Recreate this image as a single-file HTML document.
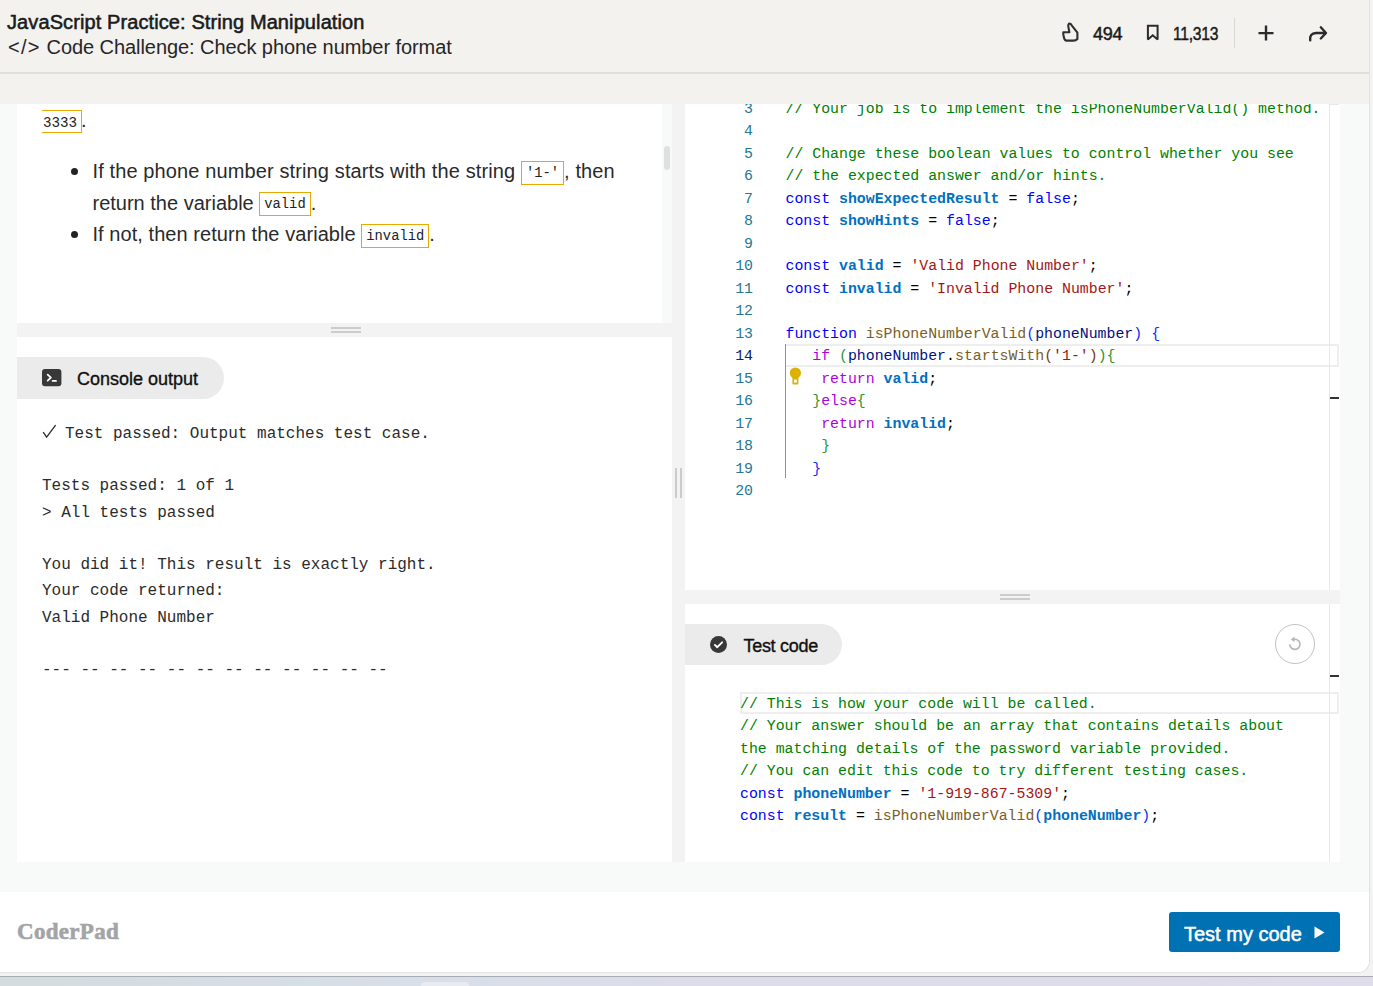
<!DOCTYPE html>
<html>
<head>
<meta charset="utf-8">
<style>
*{box-sizing:border-box;margin:0;padding:0}
html,body{width:1373px;height:986px;overflow:hidden}
body{position:relative;background:#f3f3f3;font-family:"Liberation Sans",sans-serif;color:#1f1f1f}
.abs{position:absolute}
#desk{left:0;top:976px;width:1373px;height:10px;background:linear-gradient(90deg,#d4dcdf 0%,#d8dfe9 33%,#dcdcea 50%,#dfdcec 100%);border-top:1px solid #a8abb2}
#win{left:0;top:0;width:1370px;height:973px;background:#f8f9f9;border-right:1px solid #e2e2e2;border-bottom:1px solid #e2e2e2;border-bottom-right-radius:12px;overflow:hidden}
#hdr{left:0;top:0;width:1369px;height:104px;background:#f3f2ef}
#hdrline{left:0;top:72px;width:1369px;height:2px;background:#dfdedb}
#footer{left:0;top:892px;width:1369px;height:80px;background:#fff}
.panel{background:#fff;overflow:hidden}
.split-h{background:#f3f3f3}
.grip-h{position:absolute;width:30px;height:6px;border-top:2px solid #cccccc;border-bottom:2px solid #cccccc}
.grip-v{position:absolute;width:7px;height:30px;border-left:2px solid #cccccc;border-right:2px solid #cccccc}
.pill{position:absolute;background:#ebebeb;border-radius:0 21px 21px 0}
.mono{font-family:"Liberation Mono",monospace}
.desc{font-size:20px;line-height:32px;color:#2a2a2a;white-space:nowrap}
.code{display:inline-block;vertical-align:top;margin-top:5px;height:24px;font-family:"Liberation Mono",monospace;font-size:13.8px;line-height:23px;border:1px solid #e9a800;padding:0 4px;color:#222;letter-spacing:0}
.hl{font-size:18px;line-height:22px;color:#111;white-space:nowrap;-webkit-text-stroke:0.35px #111}
.console{font-family:"Liberation Mono",monospace;font-size:16px;line-height:26px;color:#2b2b2b;white-space:pre}
.ln{position:absolute;left:0;width:68px;text-align:right;font-family:"Liberation Mono",monospace;font-size:14.875px;line-height:22px;color:#237893;white-space:pre}
.cl{position:absolute;left:100.5px;font-family:"Liberation Mono",monospace;font-size:14.875px;line-height:22px;color:#000;white-space:pre}
.bul{width:7px;height:7px;border-radius:50%;background:#222}
</style>
</head>
<body>
<div id="desk" class="abs"></div>
<div class="abs" style="left:421px;top:982px;width:48px;height:10px;background:#e8ecf2;border-radius:4px"></div>
<div id="win" class="abs">
  <div id="hdr" class="abs"></div>
  <div id="hdrline" class="abs"></div>
  <div class="abs" id="title" style="left:7px;top:10px;font-size:20px;line-height:24px;color:#1b1b1b;white-space:nowrap;letter-spacing:0.1px;-webkit-text-stroke:0.55px #1b1b1b">JavaScript Practice: String Manipulation</div>
  <div class="abs" id="subtitle" style="left:8px;top:35px;font-size:20px;line-height:24px;color:#262626;white-space:nowrap"><span style="letter-spacing:1.3px">&lt;/&gt;</span><span style="letter-spacing:0.2px"> </span><span style="letter-spacing:-0.07px">Code Challenge: Check phone number format</span></div>

  <!-- header right -->
  <svg class="abs" style="left:1055px;top:18px" width="30" height="28" viewBox="0 0 30 28">
    <path d="M8.3 14.2 L14.4 14.2 L13.3 8.6 C13.0 6.7 13.7 5.6 14.6 5.6 C15.4 5.6 16.1 6.2 16.7 7.4 L22.4 14.6 L22.4 21.0 C21.4 22.1 20.0 22.6 18.4 22.6 L11.6 22.6 C10.2 22.6 9.4 21.6 9.0 19.8 L8.3 16.4 Z" fill="none" stroke="#303030" stroke-width="2.1" stroke-linejoin="round"/>
  </svg>
  <div class="abs" style="left:1093px;top:23px;font-size:18px;line-height:22px;color:#1b1b1b;letter-spacing:-0.3px;-webkit-text-stroke:0.5px #1b1b1b">494</div>
  <svg class="abs" style="left:1145px;top:23px" width="16" height="20" viewBox="0 0 16 20">
    <path d="M2.9 2.7 L12.6 2.7 L12.6 16.4 L7.75 12.3 L2.9 16.4 Z" fill="none" stroke="#2b2b2b" stroke-width="2" stroke-linejoin="miter" stroke-miterlimit="2"/>
  </svg>
  <div class="abs" style="left:1173px;top:23px;font-size:18px;line-height:22px;color:#1b1b1b;letter-spacing:-0.3px;-webkit-text-stroke:0.45px #1b1b1b;transform:scaleX(0.87);transform-origin:0 0">11,313</div>
  <div class="abs" style="left:1234px;top:18px;width:1px;height:30px;background:#d9d8d5"></div>
  <svg class="abs" style="left:1256px;top:23px" width="20" height="20" viewBox="0 0 20 20">
    <path d="M10 2.6 V17.6 M2.5 10.1 H17.5" stroke="#2b2b2b" stroke-width="2.4"/>
  </svg>
  <svg class="abs" style="left:1307px;top:23px" width="22" height="20" viewBox="0 0 22 20">
    <path d="M3.2 17.3 C2.6 13.0 4.6 10.0 9.0 10.0 L18.6 10.0 M13.8 4.3 L19.0 10.0 L13.8 15.5" fill="none" stroke="#2b2b2b" stroke-width="2.4" stroke-linecap="round" stroke-linejoin="round"/>
  </svg>

  <!-- vertical strip -->
  <div class="abs split-h" style="left:672px;top:104px;width:13px;height:758px"></div>
  <div class="grip-v" style="left:675px;top:468px"></div>

  <!-- description panel -->
  <div class="abs panel" style="left:17px;top:104px;width:645px;height:219px">
    <div class="abs" style="left:25px;top:6px;height:23px;border:1px solid #e9a800;border-left:none;padding:0 4px 0 1px;font-family:'Liberation Mono',monospace;font-size:13.75px;line-height:21px;color:#222"><span style="position:relative;top:1.5px;font-size:14.2px">3333</span></div>
    <div class="abs" style="left:64px;top:3px;font-size:20px;line-height:26px;color:#222">.</div>
    <div class="bul abs" style="left:54px;top:64px"></div>
    <div class="bul abs" style="left:54px;top:127px"></div>
    <div class="abs desc" style="left:75.5px;top:51px;letter-spacing:0.12px">If the phone number string starts with the string <span class="code" style="margin-top:6px">'1-'</span>, then</div>
    <div class="abs desc" style="left:75.5px;top:83px">return the variable <span class="code">valid</span>.</div>
    <div class="abs desc" style="left:75.5px;top:114px;letter-spacing:0.06px">If not, then return the variable <span class="code" style="margin-top:6px">invalid</span>.</div>
  </div>
  <div class="abs" style="left:662px;top:104px;width:10px;height:219px;background:#f8f9f9"></div>
  <div class="abs" style="left:664px;top:146px;width:6px;height:24px;background:#dfe0e0;border-radius:3px"></div>

  <!-- left splitter -->
  <div class="abs split-h" style="left:17px;top:323px;width:655px;height:14px"></div>
  <div class="grip-h" style="left:331px;top:327px"></div>

  <!-- console panel -->
  <div class="abs panel" style="left:17px;top:337px;width:655px;height:525px">
    <div class="pill" style="left:0;top:20px;width:207px;height:42px"></div>
    <svg class="abs" style="left:25px;top:32px" width="20" height="18" viewBox="0 0 20 18">
      <rect x="0" y="0" width="19.4" height="17.2" rx="3" fill="#383838"/>
      <path d="M5.7 5.6 L8.9 8.6 L5.7 11.6" fill="none" stroke="#fff" stroke-width="1.8" stroke-linecap="round" stroke-linejoin="round"/>
      <path d="M10.6 11.9 H14" stroke="#fff" stroke-width="1.8" stroke-linecap="round"/>
    </svg>
    <div class="abs hl" style="left:60px;top:31.2px;letter-spacing:0px">Console output</div>
    <svg class="abs" style="left:25px;top:87px" width="15" height="15" viewBox="0 0 15 15"><path d="M1.2 8.2 L4.6 13.2 L13.6 1.2" fill="none" stroke="#2b2b2b" stroke-width="1.3"/></svg>
    <div class="abs console" style="left:25px;top:84px"><span style="display:inline-block;width:13.4px"></span> Test passed: Output matches test case.</div>
    <div class="abs console" style="left:25px;top:136px">Tests passed: 1 of 1</div>
    <div class="abs console" style="left:25px;top:163px">&gt; All tests passed</div>
    <div class="abs console" style="left:25px;top:215px">You did it! This result is exactly right.</div>
    <div class="abs console" style="left:25px;top:241px">Your code returned:</div>
    <div class="abs console" style="left:25px;top:268px">Valid Phone Number</div>
    <div class="abs console" style="left:25px;top:320px">--- -- -- -- -- -- -- -- -- -- -- --</div>
  </div>

  <!-- editor panel -->
  <div class="abs panel" style="left:685px;top:104px;width:655px;height:486px">
    <div class="abs" style="left:101px;top:240px;width:553px;height:23px;border:2px solid #eeeeee;border-left:none"></div>
    <div class="abs" style="left:100px;top:240px;width:1px;height:134px;background:#939393"></div>
    <div class="ln" style="top:-6px">3</div>
    <div class="cl" style="top:-6px"><span style="color:#008000">// Your job is to implement the isPhoneNumberValid() method.</span></div>
    <div class="ln" style="top:16px">4</div>
    <div class="ln" style="top:39px">5</div>
    <div class="cl" style="top:39px"><span style="color:#008000">// Change these boolean values to control whether you see</span></div>
    <div class="ln" style="top:61px">6</div>
    <div class="cl" style="top:61px"><span style="color:#008000">// the expected answer and/or hints.</span></div>
    <div class="ln" style="top:84px">7</div>
    <div class="cl" style="top:84px"><span style="color:#0000ff">const</span> <span style="color:#0070c1;font-weight:bold">showExpectedResult</span> = <span style="color:#0000ff">false</span>;</div>
    <div class="ln" style="top:106px">8</div>
    <div class="cl" style="top:106px"><span style="color:#0000ff">const</span> <span style="color:#0070c1;font-weight:bold">showHints</span> = <span style="color:#0000ff">false</span>;</div>
    <div class="ln" style="top:129px">9</div>
    <div class="ln" style="top:151px">10</div>
    <div class="cl" style="top:151px"><span style="color:#0000ff">const</span> <span style="color:#0070c1;font-weight:bold">valid</span> = <span style="color:#a31515">'Valid Phone Number'</span>;</div>
    <div class="ln" style="top:174px">11</div>
    <div class="cl" style="top:174px"><span style="color:#0000ff">const</span> <span style="color:#0070c1;font-weight:bold">invalid</span> = <span style="color:#a31515">'Invalid Phone Number'</span>;</div>
    <div class="ln" style="top:196px">12</div>
    <div class="ln" style="top:219px">13</div>
    <div class="cl" style="top:219px"><span style="color:#0000ff">function</span> <span style="color:#795e26">isPhoneNumberValid</span><span style="color:#0431fa">(</span><span style="color:#001080">phoneNumber</span><span style="color:#0431fa">)</span> <span style="color:#0431fa">{</span></div>
    <div class="ln" style="top:241px;color:#0b216f">14</div>
    <div class="cl" style="top:241px">   <span style="color:#af00db">if</span> <span style="color:#319331">(</span><span style="color:#001080">phoneNumber</span>.<span style="color:#795e26">startsWith</span><span style="color:#7b3814">(</span><span style="color:#a31515">'1-'</span><span style="color:#7b3814">)</span><span style="color:#319331">)</span><span style="color:#319331">{</span></div>
    <div class="ln" style="top:264px">15</div>
    <div class="cl" style="top:264px">    <span style="color:#af00db">return</span> <span style="color:#0070c1;font-weight:bold">valid</span>;</div>
    <div class="ln" style="top:286px">16</div>
    <div class="cl" style="top:286px">   <span style="color:#319331">}</span><span style="color:#af00db">else</span><span style="color:#319331">{</span></div>
    <div class="ln" style="top:309px">17</div>
    <div class="cl" style="top:309px">    <span style="color:#af00db">return</span> <span style="color:#0070c1;font-weight:bold">invalid</span>;</div>
    <div class="ln" style="top:331px">18</div>
    <div class="cl" style="top:331px">    <span style="color:#319331">}</span></div>
    <div class="ln" style="top:354px">19</div>
    <div class="cl" style="top:354px">   <span style="color:#0431fa">}</span></div>
    <div class="ln" style="top:376px">20</div>
    <svg class="abs" style="left:104px;top:263px" width="13" height="18" viewBox="0 0 13 18">
      <circle cx="6.4" cy="6" r="5.6" fill="#ddb100"/>
      <rect x="3.4" y="9" width="6" height="8.4" rx="1" fill="#ddb100"/>
      <rect x="5" y="12.6" width="2.8" height="3" fill="#fff"/>
    </svg>
    <div class="abs" style="left:644px;top:0;width:1px;height:486px;background:#e8e8e8"></div>
    <div class="abs" style="left:645px;top:0;width:9px;height:1px;background:#e8e8e8"></div>
    <div class="abs" style="left:645px;top:293px;width:9px;height:2px;background:#333"></div>
  </div>
  <div class="abs split-h" style="left:685px;top:590px;width:655px;height:14px"></div>
  <div class="grip-h" style="left:1000px;top:594px"></div>

  <!-- test code panel -->
  <div class="abs panel" style="left:685px;top:604px;width:655px;height:258px">
    <div class="pill" style="left:0;top:20px;width:157px;height:41px;border-radius:0 20.5px 20.5px 0"></div>
    <svg class="abs" style="left:25px;top:32px" width="17" height="17" viewBox="0 0 17 17">
      <circle cx="8.5" cy="8.5" r="8.5" fill="#383838"/>
      <path d="M4.9 8.9 L7.3 11.2 L12.1 6.3" fill="none" stroke="#fff" stroke-width="1.9" stroke-linecap="round" stroke-linejoin="round"/>
    </svg>
    <div class="abs hl" style="left:58.5px;top:31px;letter-spacing:-0.3px">Test code</div>
    <div class="abs" style="left:590px;top:20px;width:40px;height:40px;border:1px solid #c2c2c2;border-radius:50%"></div>
    <svg class="abs" style="left:602px;top:32px" width="16" height="16" viewBox="0 0 16 16">
      <path d="M2.8 8.3 A5.1 5.1 0 1 0 6.2 3.5" fill="none" stroke="#b6b6b6" stroke-width="1.6"/>
      <path d="M7.5 0.4 L3.9 3.5 L7.5 6.3 Z" fill="#b6b6b6"/>
    </svg>
    <div class="abs" style="left:55px;top:88px;width:599px;height:22px;border:2px solid #eeeeee"></div>
    <div class="cl" style="left:55px;top:89px"><span style="color:#008000">// This is how your code will be called.</span></div>
    <div class="cl" style="left:55px;top:111px"><span style="color:#008000">// Your answer should be an array that contains details about</span></div>
    <div class="cl" style="left:55px;top:134px"><span style="color:#008000">the matching details of the password variable provided.</span></div>
    <div class="cl" style="left:55px;top:156px"><span style="color:#008000">// You can edit this code to try different testing cases.</span></div>
    <div class="cl" style="left:55px;top:179px"><span style="color:#0000ff">const</span> <span style="color:#0070c1;font-weight:bold">phoneNumber</span> = <span style="color:#a31515">'1-919-867-5309'</span>;</div>
    <div class="cl" style="left:55px;top:201px"><span style="color:#0000ff">const</span> <span style="color:#0070c1;font-weight:bold">result</span> = <span style="color:#795e26">isPhoneNumberValid</span><span style="color:#0431fa">(</span><span style="color:#0070c1;font-weight:bold">phoneNumber</span><span style="color:#0431fa">)</span>;</div>
    <div class="abs" style="left:644px;top:0;width:1px;height:258px;background:#e8e8e8"></div>
    <div class="abs" style="left:645px;top:71px;width:9px;height:2px;background:#333"></div>
  </div>

  <div id="footer" class="abs">
    <div class="abs" style="left:17px;top:26px;font-family:'Liberation Serif',serif;font-weight:bold;font-size:23px;line-height:28px;color:#a2a4a6;letter-spacing:0.3px;-webkit-text-stroke:0.6px #a2a4a6">CoderPad</div>
    <div class="abs" style="left:1169px;top:20px;width:171px;height:40px;background:#0071b2;border-radius:3px">
      <div class="abs" style="left:15px;top:11px;font-size:20px;line-height:22px;color:#fff;white-space:nowrap;letter-spacing:0px;-webkit-text-stroke:0.5px #fff">Test my code</div>
      <svg class="abs" style="left:145px;top:14px" width="11" height="13" viewBox="0 0 11 13"><path d="M0.5 0.5 L10.5 6.5 L0.5 12.5 Z" fill="#fff"/></svg>
    </div>
  </div>
</div>
</body>
</html>
